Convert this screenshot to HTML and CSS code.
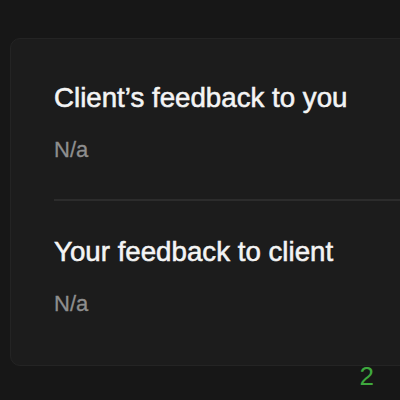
FILE: index.html
```html
<!DOCTYPE html>
<html>
<head>
<meta charset="utf-8">
<link rel="stylesheet" href="styles.css">
</head>
<body>
<div class="page">
  <section class="card">
    <div class="block">
      <h2 class="title">Client’s feedback to you</h2>
      <p class="value">N/a</p>
    </div>
    <hr class="divider">
    <div class="block">
      <h2 class="title">Your feedback to client</h2>
      <p class="value">N/a</p>
    </div>
  </section>
  <div class="footer"><span class="count">2</span></div>
</div>
</body>
</html>
```
FILE: styles.css
```css
html, body {
  margin: 0;
  padding: 0;
  background: #171717;
}
.page {
  width: 400px;
  height: 400px;
  overflow: hidden;
  box-sizing: border-box;
  padding-top: 38px;
  padding-left: 10px;
  font-family: "Liberation Sans", Arial, sans-serif;
}
.card {
  width: 430px;
  box-sizing: border-box;
  background: #1c1c1c;
  border: 1px solid #242424;
  border-radius: 10px;
  padding: 45px 0 50px 43px;
}
.title {
  margin: 0;
  font-size: 27.7px;
  line-height: 28px;
  font-weight: normal;
  color: #f4f4f4;
  -webkit-text-stroke: 0.55px #f4f4f4;
}
.value {
  margin: 27px 0 0 0;
  font-size: 22px;
  line-height: 22px;
  color: #8e8e8e;
  -webkit-text-stroke: 0.3px #8e8e8e;
}
.divider {
  margin: 38px 0 37px 0;
  border: 0;
  height: 2px;
  background: #2c2c2c;
}
.footer {
  display: flex;
  justify-content: flex-end;
  padding-right: 26px;
  margin-top: -3px;
}
.count {
  font-size: 26px;
  line-height: 26px;
  color: #3ea83e;
}
```
